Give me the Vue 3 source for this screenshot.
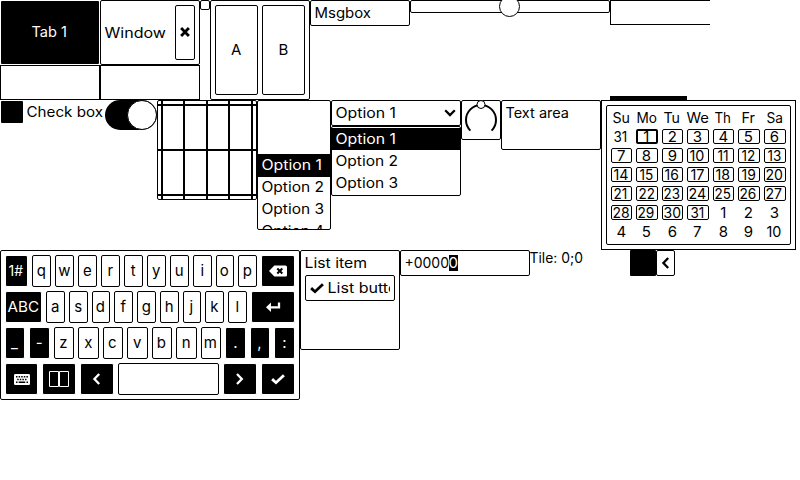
<script setup>
import { h } from 'vue'

// Single line of UI text, fitted to a given advance width.
const Label = ({ t, w }) =>
  h('svg', { width: w, height: 17, class: t.length > 1 ? 'label' : 'label single' }, [
    h('text', t.length > 1
      ? { x: -0.5, y: 13, textLength: w - 0.5, lengthAdjust: 'spacingAndGlyphs' }
      : { x: w / 2 - 0.7, y: 13, 'text-anchor': 'middle' }, t),
  ])
Label.props = ['t', 'w']

const advance = [9.3, 5.6, 8.2, 8.2, 9.4, 8.2, 8.7, 8.4, 9, 8.7]
const digitsWidth = (s) => [...s].reduce((sum, c) => sum + advance[+c], 0)

// Split a row into whole-pixel keys proportional to their units.
function layout(keys, total) {
  const units = keys.reduce((s, k) => s + k.u, 0)
  const free = total - 4 * (keys.length - 1)
  let used = 0
  return keys.map((k) => {
    const a = Math.floor((free * used) / units)
    used += k.u
    return { ...k, px: Math.floor((free * used) / units) - a }
  })
}

const letters = (s, u) => [...s].map((t) => ({ t, u, w: 12 }))
const dark = (k) => ({ ...k, dark: true })
const rows = [
  [dark({ t: '1#', u: 5, w: 15 }), ...letters('qwertyuiop', 4), dark({ icon: 'back', u: 7 })],
  [dark({ t: 'ABC', u: 6, w: 32 }), ...letters('asdfghjkl', 3), dark({ icon: 'enter', u: 7 })],
  [...letters('_-', 1).map(dark), ...letters('zxcvbnm', 1), ...letters('.,:', 1).map(dark)],
  [
    dark({ icon: 'keyboard', u: 2 }), dark({ icon: 'panes', u: 2 }), dark({ icon: 'left', u: 2 }),
    { u: 6 }, dark({ icon: 'right', u: 2 }), dark({ icon: 'check', u: 2 }),
  ],
].map((r) => layout(r, 290))

const heads = [['Su', 18], ['Mo', 21], ['Tu', 17], ['We', 23], ['Th', 17], ['Fr', 14], ['Sa', 17]]
const days = Array.from({ length: 42 }, (_, i) => {
  const n = i === 0 ? 31 : i <= 31 ? i : i - 31
  const t = String(n)
  return { t, w: t.length > 1 ? digitsWidth(t) + 0.5 : 12, on: i > 0 && i <= 31, today: i === 1 }
})
const dayColumns = layout(Array.from({ length: 7 }, () => ({ u: 1 })), 175).map((c) => c.px + 'px').join(' ')
</script>

<template>
  <main class="screen">
    <section class="row row-top">
      <div class="tabview">
        <div class="tab"><Label t="Tab 1" :w="36" /></div>
        <div class="box square fill"></div>
      </div>
      <div class="window">
        <header class="box win-head">
          <Label t="Window" :w="62" />
          <button class="box close">
            <svg width="10" height="10" viewBox="0 0 10 10"><path d="M1.1 1.1L8.9 8.9M8.9 1.1L1.1 8.9" class="heavy" /></svg>
          </button>
        </header>
        <div class="box square fill"></div>
      </div>
      <div class="box dot"></div>
      <div class="box matrix">
        <button class="box"><Label t="A" :w="12" /></button>
        <button class="box"><Label t="B" :w="12" /></button>
      </div>
      <div class="box msgbox"><Label t="Msgbox" :w="57" /></div>
      <div class="box slider"><span class="knob"></span></div>
      <div class="tabs-cut"><div class="cut-head"></div><div class="cut-bar"></div></div>
    </section>

    <section class="row row-mid">
      <div class="checkbox"><span class="tick"></span><Label t="Check box" :w="77" /></div>
      <div class="switch"><span class="switch-knob"></span></div>
      <div class="box chart">
        <svg width="98" height="98" viewBox="158 101 98 98">
          <path d="M162 101V199M184 101V199M207 101V199M229 101V199M252 101V199M158 105H256M158 150H256M158 195H256" class="grid-line" />
        </svg>
      </div>
      <div class="box roller">
        <div class="opt sel"><Label t="Option 1" :w="61" /></div>
        <div class="opt"><Label t="Option 2" :w="63" /></div>
        <div class="opt"><Label t="Option 3" :w="63" /></div>
        <div class="opt"><Label t="Option 4" :w="63" /></div>
      </div>
      <div class="dropdown">
        <div class="box dd-head">
          <Label t="Option 1" :w="61" />
          <svg width="12" height="8" viewBox="0 0 12 8"><path d="M1.2 1.3L6 6.1L10.8 1.3" class="thick" /></svg>
        </div>
        <div class="box dd-list">
          <div class="opt sel"><Label t="Option 1" :w="61" /></div>
          <div class="opt"><Label t="Option 2" :w="63" /></div>
          <div class="opt"><Label t="Option 3" :w="63" /></div>
        </div>
      </div>
      <div class="box arc">
        <svg width="38" height="38" viewBox="1 1 38 38">
          <path d="M9.4 30.6A15 15 0 1 1 30.6 30.6" class="arc-line" />
          <circle cx="20" cy="4.5" r="4" class="arc-knob" />
        </svg>
      </div>
      <div class="box textarea"><Label t="Text area" :w="64" /></div>
      <div class="calendar">
        <div class="box cal-grid" :style="{ gridTemplateColumns: dayColumns }">
          <div v-for="d in heads" :key="d[0]" class="day"><Label :t="d[0]" :w="d[1]" /></div>
          <div v-for="(d, i) in days" :key="i" class="day" :class="{ box: d.on, today: d.today }">
            <Label :t="d.t" :w="d.w" />
          </div>
        </div>
      </div>
    </section>

    <section class="row row-low">
      <div class="box keyboard">
        <div v-for="(r, i) in rows" :key="i" class="keys">
          <button v-for="(k, j) in r" :key="j" class="box key" :class="{ dark: k.dark }" :style="{ width: k.px + 'px' }">
            <Label v-if="k.t" :t="k.t" :w="k.w" />
            <svg v-else-if="k.icon === 'back'" width="18" height="12" viewBox="0 0 18 12">
              <path d="M5.3 .5H16.5Q18 .5 18 2V10Q18 11.5 16.5 11.5H5.3L0 6Z" fill="currentColor" />
              <path d="M8.3 3.5L13.3 8.5M13.3 3.5L8.3 8.5" class="cut" />
            </svg>
            <svg v-else-if="k.icon === 'enter'" width="14" height="10" viewBox="0 0 14 10">
              <path d="M13 .5V5.3H3" class="thick" /><path d="M0 5.3L5 .6V10Z" fill="currentColor" />
            </svg>
            <svg v-else-if="k.icon === 'keyboard'" width="16" height="11" viewBox="0 0 16 11">
              <rect width="16" height="11" rx="1.3" fill="currentColor" />
              <path d="M2 2.8H14M3.2 5.5H13" class="pips" /><path d="M2 8.3H3.5M4.7 8.3H11.2M12.5 8.3H14" class="bars" />
            </svg>
            <svg v-else-if="k.icon === 'panes'" width="20" height="16" viewBox="0 0 20 16">
              <path d="M.5 .5H9.5V15.5H.5ZM10.5 .5H19.5V15.5H10.5Z" class="thin" />
            </svg>
            <svg v-else-if="k.icon === 'left'" width="8" height="12" viewBox="0 0 8 12"><path d="M6.2 1L1.4 6L6.2 11" class="thick" /></svg>
            <svg v-else-if="k.icon === 'right'" width="8" height="12" viewBox="0 0 8 12"><path d="M1 1L5.8 6L1 11" class="thick" /></svg>
            <svg v-else-if="k.icon === 'check'" width="14" height="10" viewBox="0 0 14 10"><path d="M1.1 5.1L5 8.7L12.9 1.2" class="heavy" /></svg>
          </button>
        </div>
      </div>
      <div class="box list">
        <Label t="List item" :w="63" />
        <button class="box list-btn">
          <svg width="14" height="10" viewBox="0 0 14 10"><path d="M1.1 5.1L5 8.7L12.9 1.2" class="heavy" /></svg>
          <span class="clip"><Label t="List button" :w="80" /></span>
        </button>
      </div>
      <div class="box spinbox"><Label t="+0000" :w="45" /><span class="cursor"><Label t="0" :w="10" /></span></div>
      <div class="tile"><Label t="Tile: 0;0" :w="54" /></div>
      <div class="menu">
        <div class="swatch"></div>
        <button class="box back">
          <svg width="8" height="12" viewBox="0 0 8 12"><path d="M6.2 1L1.4 6L6.2 11" class="thick" /></svg>
        </button>
      </div>
    </section>
  </main>
</template>

<style>
body { background: #fff; overflow: hidden; }
</style>

<style scoped>
* { box-sizing: border-box; }
.screen { width: 800px; height: 480px; background: #fff; color: #000; font-family: Inter, "Liberation Sans", sans-serif; }
svg { display: block; flex: none; overflow: visible; }
.label { fill: currentColor; font-size: 14px; font-weight: 400; }
.single { font-size: 15px; }
button { font: inherit; color: inherit; padding: 0; margin: 0; display: flex; align-items: center; justify-content: center; }
.box { background: #fff; border: 1px solid #000; border-radius: 2px; }
.square { border-radius: 0; }
.fill { height: 35px; }
.row { display: flex; align-items: flex-start; }
.row > * { flex: none; }
.row-top { height: 100px; }
.row-mid { height: 150px; }
.row-low { height: 150px; }
path { fill: none; }
path[fill] { fill: currentColor; }
.heavy { stroke: currentColor; stroke-width: 2.8; }
.thick { stroke: currentColor; stroke-width: 2.3; }
.thin { stroke: currentColor; stroke-width: 1; }
.cut { stroke: #000; stroke-width: 2; }
.pips { stroke: #000; stroke-width: 1.5; stroke-dasharray: 1.5 1.1; }
.bars { stroke: #000; stroke-width: 1.4; }

.tabview, .window { width: 100px; }
.tab { height: 63px; margin: 1px 1px 1px; border-radius: 1px; background: #000; color: #fff; display: flex; align-items: center; justify-content: center; }
.win-head { height: 65px; padding: 4px; display: flex; align-items: center; justify-content: space-between; }
.win-head > .label { margin-top: 2px; }
.close { width: 20px; height: 55px; padding-bottom: 1px; }
.dot { width: 10px; height: 10px; }
.matrix { width: 100px; height: 100px; padding: 4px; display: grid; grid-template-columns: 43px 43px; gap: 4px; }
.msgbox { width: 100px; height: 26px; padding: 4px; }
.slider { width: 200px; height: 13px; display: flex; align-items: center; justify-content: center; }
.knob { width: 21px; height: 21px; flex: none; border: 1px solid #000; border-radius: 50%; background: #fff; margin-right: 1px; }
.tabs-cut { width: 100px; height: 100px; display: flex; flex-direction: column; justify-content: space-between; }
.cut-head { height: 25px; border: 1px solid #000; border-right: 0; }
.cut-bar { width: 77px; height: 4px; background: #000; }

.checkbox { width: 105px; display: flex; gap: 4px; padding: 0 0 0 1px; }
.tick { width: 22px; height: 22px; margin-top: 1px; border-radius: 1px; background: #000; }
.checkbox .label { margin-top: 4px; }
.switch { width: 52px; height: 30px; border-radius: 15px; background: #000; display: flex; justify-content: flex-end; }
.switch-knob { width: 30px; height: 30px; border: 1px solid #000; border-radius: 50%; background: #fff; }
.chart { width: 100px; height: 100px; overflow: hidden; }
.grid-line { stroke: #000; stroke-width: 2; }
.roller { width: 74px; height: 130px; padding-top: 53px; overflow: hidden; }
.opt { height: 22px; padding: 3px 4px 0; }
.sel { background: #000; color: #fff; }
.roller .sel { height: 23px; margin-bottom: -1px; }
.dropdown { width: 130px; }
.dd-head { height: 26px; padding: 0 4px; display: flex; align-items: center; justify-content: space-between; }
.dd-list { height: 70px; padding-top: 1px; }
.arc { width: 40px; height: 40px; }
.arc-line { stroke: #000; stroke-width: 2; }
.arc-knob { fill: #fff; stroke: #000; stroke-width: 1; }
.textarea { width: 100px; height: 50px; padding: 4px; }
.calendar { width: 195px; height: 150px; padding: 4px; border: 1px solid #000; background: #fff; }
.cal-grid { width: 185px; height: 140px; padding: 4px; display: grid; grid-auto-rows: 15px; gap: 4px; }
.day { display: flex; justify-content: center; align-items: center; }
.day .label { margin: -1px -2px -3px; }
.today { border-width: 2px; }

.keyboard { width: 300px; height: 150px; padding: 4px; display: flex; flex-direction: column; gap: 4px; }
.keys { display: flex; gap: 4px; height: 32px; }
.key { height: 32px; flex: none; }
.dark { background: #000; color: #fff; border-color: #fff; }
.list { width: 100px; height: 100px; padding: 4px; }
.list-btn { width: 90px; height: 26px; margin-top: 3px; padding: 0 4px; gap: 4px; justify-content: flex-start; }
.clip { width: 62px; overflow: hidden; }
.spinbox { width: 130px; height: 26px; padding: 4px; display: flex; }
.spinbox > .label { margin-right: -1px; }
.cursor { width: 9px; height: 16px; background: #000; color: #fff; }
.tile { width: 100px; }
.menu { display: flex; }
.swatch { width: 26px; height: 26px; border-radius: 1px; background: #000; }
.back { width: 19px; height: 26px; }
</style>
